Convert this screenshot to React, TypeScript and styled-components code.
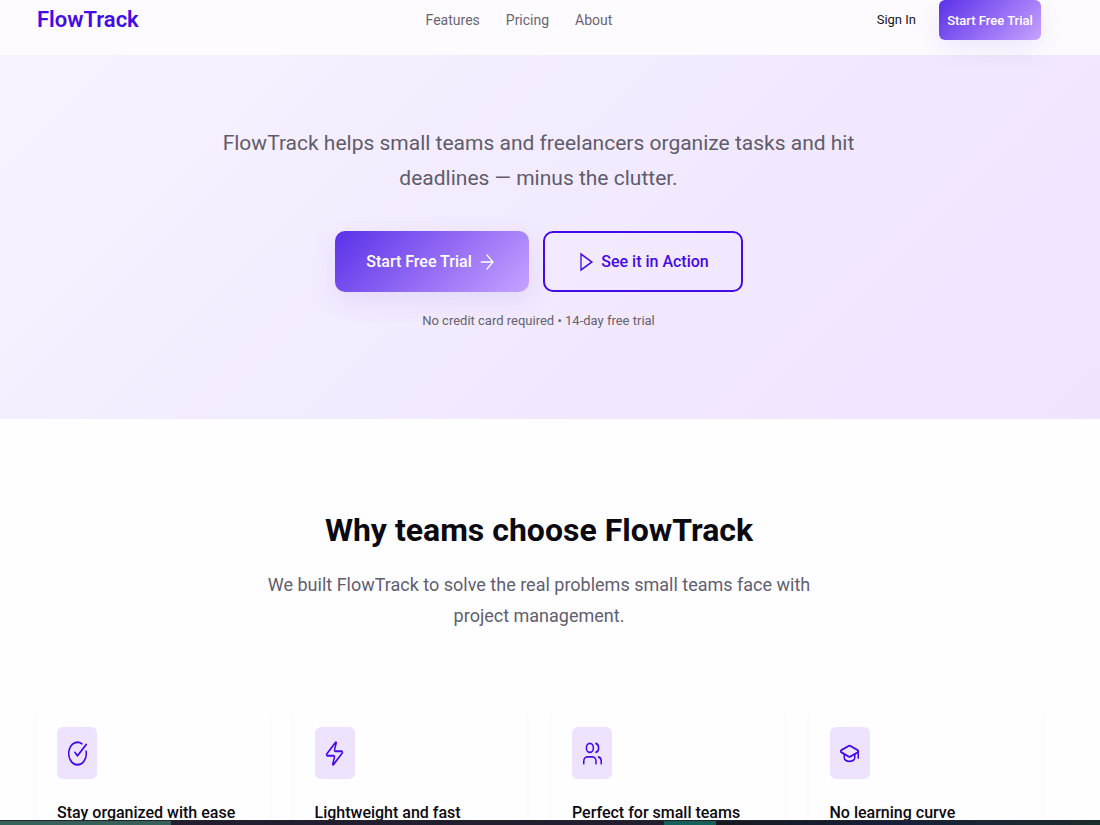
import React from "react";
import styled, { createGlobalStyle, css } from "styled-components";
import { ArrowRight, CircleCheckBig, GraduationCap, Users, Zap } from "lucide-react";

const GlobalStyle = createGlobalStyle`
  *, *::before, *::after { box-sizing: border-box; }
  body {
    margin: 0;
    overflow: hidden;
    background: #fefdff;
    color: #0b0a10;
    font-family: Roboto, "Liberation Sans", sans-serif;
  }
  h1, h2, h3, p { margin: 0; }
  a { text-decoration: none; color: inherit; }
  button { font-family: inherit; cursor: pointer; }
`;

const Page = styled.div`
  height: 100vh;
  overflow: hidden;
`;

const Header = styled.header`
  display: grid;
  grid-template-columns: 1fr auto 1fr;
  align-items: center;
  padding: 0 59px 15px 37px;
  background: #fdfbff;
`;

const Logo = styled.a`
  font-size: 22px;
  line-height: 40px;
  font-weight: 600;
  && { color: #430be6; }
`;

const Nav = styled.nav`
  display: flex;
  gap: 26px;
  padding-right: 40px;
  font-size: 14px;
  line-height: 24px;
  color: #696573;
`;

const Actions = styled.div`
  display: flex;
  justify-content: flex-end;
  align-items: center;
  gap: 23px;
`;

const SignIn = styled.a`
  font-size: 13px;
  line-height: 24px;
  color: #15131c;
`;

const filled = css`
  border: 0;
  color: #fff;
  background: linear-gradient(135deg, #5a31e8 0%, #9169f4 50%, #c5a3ff 100%);
  box-shadow: 0 8px 26px rgba(94, 53, 232, 0.1);
`;

const SmallButton = styled.button`
  ${filled}
  width: 102px;
  height: 40px;
  padding: 0;
  border-radius: 6px;
  font-size: 13px;
  font-weight: 500;
  white-space: nowrap;
`;

const Hero = styled.section`
  display: flex;
  flex-direction: column;
  align-items: center;
  padding: 71px 60px 87px 37px;
  background: linear-gradient(135deg, #f8f3ff 0%, #f2eafe 50%, #f0e3fe 100%);
`;

const Lead = styled.p`
  max-width: 660px;
  font-size: 21px;
  line-height: 35px;
  text-align: center;
  color: #5f5c6b;
`;

const ButtonRow = styled.div`
  display: flex;
  gap: 14px;
  margin: 35px 0 18px;
`;

const LargeButton = styled.button<{ $outline?: boolean }>`
  ${filled}
  display: flex;
  align-items: center;
  justify-content: center;
  gap: 5px;
  width: ${(p) => (p.$outline ? 200 : 194)}px;
  height: 61px;
  padding: 0;
  border-radius: 10px;
  font-size: 16px;
  font-weight: 500;
  ${(p) =>
    p.$outline &&
    css`
      border: 2px solid #430be6;
      color: #430be6;
      background: transparent;
      box-shadow: none;
    `}
`;

const Note = styled.p`
  font-size: 13px;
  line-height: 22px;
  color: #66626f;
`;

const Features = styled.section`
  padding: 89px 59px 40px 37px;
`;

const Heading = styled.h2`
  font-size: 32px;
  line-height: 44px;
  font-weight: 700;
  text-align: center;
`;

const Intro = styled.p`
  max-width: 560px;
  margin: 17px auto 74px;
  font-size: 18px;
  line-height: 31px;
  text-align: center;
  color: #5f5f70;
`;

const Cards = styled.div`
  display: grid;
  grid-template-columns: repeat(4, minmax(0, 1fr));
  gap: 26px;
`;

const Card = styled.article`
  padding: 22px 20px 40px;
  border-radius: 10px;
  background: #fefdff;
  box-shadow: 0 4px 8px rgba(94, 53, 232, 0.03);
`;

const IconTile = styled.div`
  display: flex;
  align-items: center;
  justify-content: center;
  width: 40px;
  height: 52px;
  margin-bottom: 20px;
  border-radius: 6px;
  background: #ede3fe;
  color: #430be6;
`;

const CardTitle = styled.h3`
  font-size: 16px;
  line-height: 28px;
  font-weight: 500;
`;

const Taskbar = styled.div`
  position: fixed;
  inset: auto 0 0;
  height: 5px;
  border-top: 1px solid #24242c;
  background: linear-gradient(
    90deg,
    #38605a 0 171px,
    #221e30 171px 664px,
    #156058 664px 716px,
    #16191f 716px,
    #17203a 900px,
    #1b2c2c 1100px
  );
`;

const PlayIcon = () => (
  <svg
    width="20"
    height="24"
    viewBox="0 0 24 24"
    preserveAspectRatio="none"
    fill="none"
    stroke="currentColor"
    strokeWidth="1.6"
    strokeLinejoin="miter"
    aria-hidden="true"
  >
    <path d="M6 4v16l13-8z" />
  </svg>
);

const features = [
  { title: "Stay organized with ease", Icon: CircleCheckBig },
  { title: "Lightweight and fast", Icon: Zap },
  { title: "Perfect for small teams", Icon: Users },
  { title: "No learning curve", Icon: GraduationCap },
];

export default function App() {
  return (
    <Page>
      <GlobalStyle />
      <Header>
        <Logo href="#">FlowTrack</Logo>
        <Nav>
          <a href="#features">Features</a>
          <a href="#pricing">Pricing</a>
          <a href="#about">About</a>
        </Nav>
        <Actions>
          <SignIn href="#signin">Sign In</SignIn>
          <SmallButton>Start Free Trial</SmallButton>
        </Actions>
      </Header>
      <main>
        <Hero>
          <Lead>FlowTrack helps small teams and freelancers organize tasks and hit deadlines — minus the clutter.</Lead>
          <ButtonRow>
            <LargeButton>
              Start Free Trial
              <ArrowRight width={20} height={24} strokeWidth={1.6} preserveAspectRatio="none" />
            </LargeButton>
            <LargeButton $outline>
              <PlayIcon />
              See it in Action
            </LargeButton>
          </ButtonRow>
          <Note>No credit card required • 14-day free trial</Note>
        </Hero>
        <Features id="features">
          <Heading>Why teams choose FlowTrack</Heading>
          <Intro>We built FlowTrack to solve the real problems small teams face with project management.</Intro>
          <Cards>
            {features.map(({ title, Icon }) => (
              <Card key={title}>
                <IconTile>
                  <Icon width={21} height={27} strokeWidth={1.75} preserveAspectRatio="none" />
                </IconTile>
                <CardTitle>{title}</CardTitle>
              </Card>
            ))}
          </Cards>
        </Features>
      </main>
      <Taskbar />
    </Page>
  );
}
